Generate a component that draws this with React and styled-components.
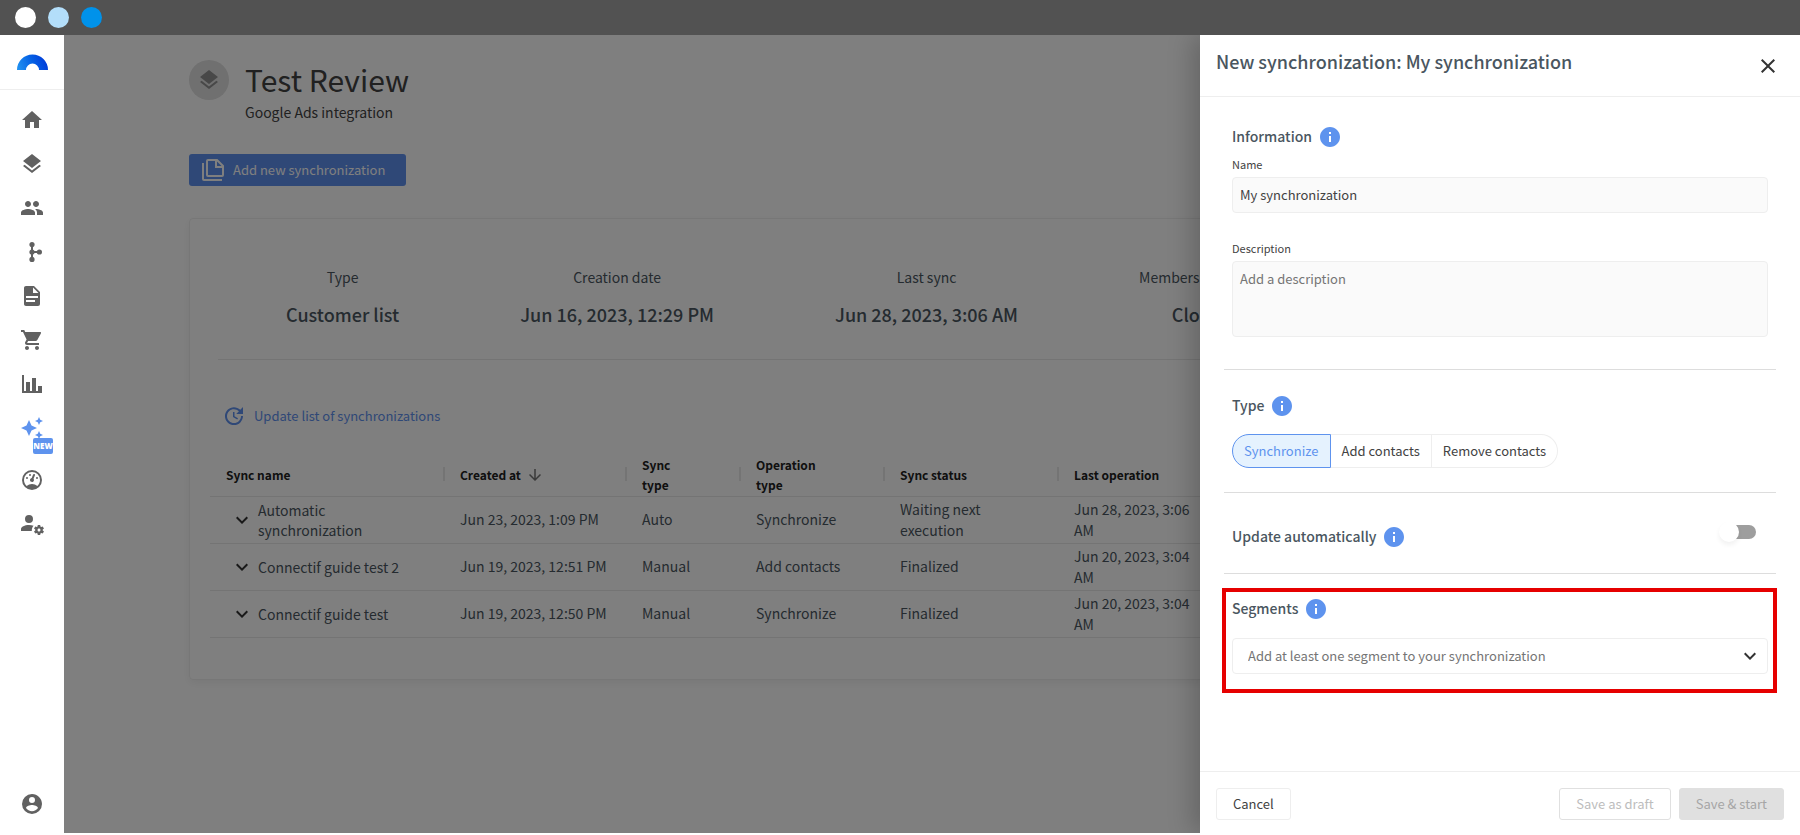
import React, { useState } from "react";
import styled, { createGlobalStyle } from "styled-components";
import {
  MdArrowDownward,
  MdClose,
  MdGroup,
  MdHome,
  MdInfo,
  MdLayers,
  MdShoppingCart,
  MdUpdate,
} from "react-icons/md";

const GlobalStyle = createGlobalStyle`
  * {
    box-sizing: border-box;
  }
  body {
    margin: 0;
    background: #ffffff;
  }
  body, button, input, textarea, select {
    font-family: "Noto Sans CJK SC", "Noto Sans", sans-serif;
  }
`;

/* ---------- icons ---------- */

const Svg = ({ d, size = 24, children }) => (
  <svg width={size} height={size} viewBox="0 0 24 24" fill="currentColor" aria-hidden="true">
    {d && <path d={d} />}
    {children}
  </svg>
);

const Logo = () => (
  <svg width="31" height="16" viewBox="0 0 31 16" aria-hidden="true">
    <defs>
      <linearGradient id="logo" x1="0" y1="0.6" x2="1" y2="0.4">
        <stop offset="0" stopColor="#1f8ff0" />
        <stop offset="0.5" stopColor="#0560e4" />
        <stop offset="1" stopColor="#0038d8" />
      </linearGradient>
    </defs>
    <path d="M0 16a15.5 15.5 0 0 1 31 0h-9a6.5 6.5 0 0 0-13 0z" fill="url(#logo)" />
  </svg>
);

const BranchIcon = () => (
  <Svg>
    <circle cx="12" cy="4.6" r="2.6" />
    <circle cx="12" cy="12" r="2.6" />
    <circle cx="12" cy="19.4" r="2.6" />
    <circle cx="19.4" cy="12" r="2.6" />
    <path d="M11 4.6h2V11h6.4v2H13v6.4h-2z" />
  </Svg>
);

const DocumentIcon = () => (
  <Svg d="M13,9H18.5L13,3.5V9M6,2H14L20,8V20A2,2 0 0,1 18,22H6C4.89,22 4,21.1 4,20V4C4,2.89 4.89,2 6,2M15,18V16H6V18H15M18,14V12H6V14H18Z" />
);

const ChartIcon = () => (
  <Svg d="M22,21H2V3H4V19H6V10H10V19H12V6H16V19H18V14H22V21Z" />
);

const SparklesIcon = () => (
  <Svg d="M19,1L17.74,3.75L15,5L17.74,6.26L19,9L20.25,6.26L23,5L20.25,3.75M9,4L6.5,9.5L1,12L6.5,14.5L9,20L11.5,14.5L17,12L11.5,9.5M19,15L17.74,17.74L15,19L17.74,20.25L19,23L20.25,20.25L23,19L20.25,17.74" />
);

const GaugeIcon = () => (
  <Svg d="M12 2A10 10 0 0 0 2 12A10 10 0 0 0 12 22A10 10 0 0 0 22 12A10 10 0 0 0 12 2M12 4A8 8 0 0 1 20 12C20 14.4 19 16.5 17.3 18C15.9 16.7 14 16 12 16S8.2 16.7 6.7 18C5 16.5 4 14.4 4 12A8 8 0 0 1 12 4M14 5.89C13.62 5.9 13.26 6.15 13.1 6.54L11.81 9.77L11.71 10C11 10.13 10.41 10.6 10.14 11.26C9.73 12.29 10.23 13.45 11.26 13.86C12.29 14.27 13.45 13.77 13.86 12.74C14.12 12.08 14 11.32 13.57 10.76L13.67 10.5L14.96 7.29L14.97 7.26C15.17 6.75 14.92 6.17 14.41 5.96C14.28 5.91 14.15 5.89 14 5.89M10 6A1 1 0 0 0 9 7A1 1 0 0 0 10 8A1 1 0 0 0 11 7A1 1 0 0 0 10 6M7 9A1 1 0 0 0 6 10A1 1 0 0 0 7 11A1 1 0 0 0 8 10A1 1 0 0 0 7 9M17 9A1 1 0 0 0 16 10A1 1 0 0 0 17 11A1 1 0 0 0 18 10A1 1 0 0 0 17 9Z" />
);

const AccountCogIcon = () => (
  <Svg>
    <path
      transform="translate(-1 -1)"
      d="M10 4A4 4 0 0 0 6 8A4 4 0 0 0 10 12A4 4 0 0 0 14 8A4 4 0 0 0 10 4M10 14C5.58 14 2 15.79 2 18V20H12.8C12.7 18 13.2 16 14.6 14.7C13.3 14.2 11.6 14 10 14Z"
    />
    <path
      transform="translate(1 1)"
      d="M17 12C16.87 12 16.76 12.09 16.74 12.21L16.55 13.53C16.25 13.66 15.96 13.82 15.7 14L14.46 13.5C14.35 13.5 14.22 13.5 14.15 13.63L13.15 15.36C13.09 15.47 13.11 15.6 13.21 15.68L14.27 16.5C14.25 16.67 14.24 16.83 14.24 17C14.24 17.17 14.25 17.33 14.27 17.5L13.21 18.32C13.12 18.4 13.09 18.53 13.15 18.64L14.15 20.37C14.21 20.5 14.34 20.5 14.46 20.5L15.7 20C15.96 20.18 16.24 20.35 16.55 20.47L16.74 21.79C16.76 21.91 16.86 22 17 22H19C19.11 22 19.22 21.91 19.24 21.79L19.43 20.47C19.73 20.34 20 20.18 20.27 20L21.5 20.5C21.63 20.5 21.76 20.5 21.83 20.37L22.83 18.64C22.89 18.53 22.86 18.4 22.77 18.32L21.7 17.5C21.72 17.33 21.74 17.17 21.74 17C21.74 16.83 21.73 16.67 21.7 16.5L22.76 15.68C22.85 15.6 22.88 15.47 22.82 15.36L21.82 13.63C21.76 13.5 21.63 13.5 21.5 13.5L20.27 14C20 13.82 19.73 13.65 19.42 13.53L19.23 12.21C19.22 12.09 19.11 12 19 12H17M18 15.5C18.83 15.5 19.5 16.17 19.5 17C19.5 17.83 18.83 18.5 18 18.5C17.16 18.5 16.5 17.83 16.5 17C16.5 16.17 17.17 15.5 18 15.5Z"
    />
  </Svg>
);

const AccountIcon = () => (
  <Svg d="M12,19.2C9.5,19.2 7.29,17.92 6,16C6.03,14 10,12.9 12,12.9C14,12.9 17.97,14 18,16C16.71,17.92 14.5,19.2 12,19.2M12,5A3,3 0 0,1 15,8A3,3 0 0,1 12,11A3,3 0 0,1 9,8A3,3 0 0,1 12,5M12,2A10,10 0 0,0 2,12A10,10 0 0,0 12,22A10,10 0 0,0 22,12C22,6.47 17.5,2 12,2Z" />
);

const ChevronIcon = () => (
  <Svg d="M7.41,8.58L12,13.17L16.59,8.58L18,10L12,16L6,10L7.41,8.58Z" />
);

const FilesIcon = () => (
  <svg width="22" height="22" viewBox="0 0 22 22" fill="none" stroke="currentColor" strokeWidth="2" aria-hidden="true">
    <path d="M1 4v16a1 1 0 0 0 1 1h18" />
    <path d="M6 1h9l6 6v9a1 1 0 0 1-1 1H6a1 1 0 0 1-1-1V2a1 1 0 0 1 1-1z" />
    <path d="M14 1v7h7" />
  </svg>
);

/* ---------- data ---------- */

const navItems = [
  { label: "Home", icon: <MdHome size={24} /> },
  { label: "Integrations", icon: <MdLayers size={24} /> },
  { label: "Contacts", icon: <MdGroup size={24} /> },
  { label: "Workflows", icon: <BranchIcon /> },
  { label: "Content", icon: <DocumentIcon /> },
  { label: "Store", icon: <MdShoppingCart size={24} /> },
  { label: "Analytics", icon: <ChartIcon /> },
  { label: "AI", icon: <SparklesIcon />, isNew: true },
  { label: "Performance", icon: <GaugeIcon /> },
  { label: "User settings", icon: <AccountCogIcon /> },
];

const stats = [
  { label: "Type", value: "Customer list" },
  { label: "Creation date", value: "Jun 16, 2023, 12:29 PM" },
  { label: "Last sync", value: "Jun 28, 2023, 3:06 AM" },
  { label: "Membership status", value: "Closed" },
];

const columns = [
  { label: "Sync name", width: 234 },
  { label: "Created at", width: 182, sorted: true },
  { label: "Sync type", width: 114 },
  { label: "Operation type", width: 144 },
  { label: "Sync status", width: 174 },
  { label: "Last operation", width: 152 },
];

const rows = [
  ["Automatic synchronization", "Jun 23, 2023, 1:09 PM", "Auto", "Synchronize", "Waiting next execution", "Jun 28, 2023, 3:06 AM"],
  ["Connectif guide test 2", "Jun 19, 2023, 12:51 PM", "Manual", "Add contacts", "Finalized", "Jun 20, 2023, 3:04 AM"],
  ["Connectif guide test", "Jun 19, 2023, 12:50 PM", "Manual", "Synchronize", "Finalized", "Jun 20, 2023, 3:04 AM"],
];

const syncTypes = ["Synchronize", "Add contacts", "Remove contacts"];

/* ---------- page ---------- */

export default function App() {
  const [name, setName] = useState("My synchronization");
  const [type, setType] = useState("Synchronize");

  return (
    <Page>
      <GlobalStyle />
      <WindowBar>
        <Dot $color="#ffffff" />
        <Dot $color="#b3defa" />
        <Dot $color="#0092ea" />
      </WindowBar>
      <Body>
        <Sidebar>
          <LogoLink href="#" aria-label="Dashboard">
            <Logo />
          </LogoLink>
          <NavList>
            {navItems.map((item) => (
              <NavLink key={item.label} href="#" aria-label={item.label} $active={item.isNew}>
                {item.icon}
                {item.isNew && <NewBadge>NEW</NewBadge>}
              </NavLink>
            ))}
          </NavList>
          <NavLink href="#" aria-label="Account">
            <AccountIcon />
          </NavLink>
        </Sidebar>

        <Main>
          <Heading>
            <Avatar>
              <MdLayers size={24} />
            </Avatar>
            <div>
              <Title>Test Review</Title>
              <Subtitle>Google Ads integration</Subtitle>
            </div>
          </Heading>
          <AddButton type="button">
            <FilesIcon />
            <span>Add new synchronization</span>
          </AddButton>

          <Card>
            <Stats>
              {stats.map((stat) => (
                <Stat key={stat.label}>
                  <dt>{stat.label}</dt>
                  <dd>{stat.value}</dd>
                </Stat>
              ))}
            </Stats>
            <UpdateButton type="button">
              <MdUpdate size={24} />
              <span>Update list of synchronizations</span>
            </UpdateButton>
            <Table>
              <colgroup>
                {columns.map((col) => (
                  <Col key={col.label} $width={col.width} />
                ))}
                <col />
              </colgroup>
              <thead>
                <tr>
                  {columns.map((col) => (
                    <Th key={col.label}>
                      <ThInner>
                        {col.label}
                        {col.sorted && <MdArrowDownward size={18} />}
                      </ThInner>
                    </Th>
                  ))}
                  <EmptyCell />
                </tr>
              </thead>
              <tbody>
                {rows.map((row) => (
                  <tr key={row[0]}>
                    {row.map((cell, i) => (
                      <Td key={columns[i].label}>
                        {i === 0 ? (
                          <NameCell>
                            <ExpandButton type="button" aria-label={"Expand " + cell}>
                              <ChevronIcon />
                            </ExpandButton>
                            {cell}
                          </NameCell>
                        ) : (
                          cell
                        )}
                      </Td>
                    ))}
                    <EmptyCell />
                  </tr>
                ))}
              </tbody>
            </Table>
          </Card>
          <Backdrop />
        </Main>

        <Drawer>
          <DrawerHeader>
            <DrawerTitle>New synchronization: My synchronization</DrawerTitle>
            <CloseButton type="button" aria-label="Close">
              <MdClose size={24} />
            </CloseButton>
          </DrawerHeader>

          <DrawerBody>
            <InfoSection>
              <SectionTitle>
                Information <MdInfo size={24} />
              </SectionTitle>
              <Field>
                <label htmlFor="name">Name</label>
                <Input id="name" value={name} onChange={(e) => setName(e.target.value)} />
              </Field>
              <Field>
                <label htmlFor="description">Description</label>
                <Textarea id="description" placeholder="Add a description" />
              </Field>
            </InfoSection>

            <Section>
              <SectionTitle>
                Type <MdInfo size={24} />
              </SectionTitle>
              <ButtonGroup>
                {syncTypes.map((item) => (
                  <GroupButton key={item} type="button" $active={item === type} onClick={() => setType(item)}>
                    {item}
                  </GroupButton>
                ))}
              </ButtonGroup>
            </Section>

            <UpdateSection>
              <SectionTitle as="label" htmlFor="auto">
                Update automatically <MdInfo size={24} />
              </SectionTitle>
              <Switch id="auto" type="checkbox" role="switch" />
            </UpdateSection>

            <SegmentSection>
              <SectionTitle as="label" htmlFor="segments">
                Segments <MdInfo size={24} />
              </SectionTitle>
              <SelectBox>
                <Select id="segments" defaultValue="">
                  <option value="">Add at least one segment to your synchronization</option>
                </Select>
                <ChevronIcon />
              </SelectBox>
            </SegmentSection>
          </DrawerBody>

          <DrawerFooter>
            <Button type="button">Cancel</Button>
            <FooterRight>
              <Button type="button" disabled>
                Save as draft
              </Button>
              <Button type="button" disabled $filled>
                Save &amp; start
              </Button>
            </FooterRight>
          </DrawerFooter>
        </Drawer>
      </Body>
    </Page>
  );
}

/* ---------- styles ---------- */

const Page = styled.div`
  display: flex;
  flex-direction: column;
  min-height: 100vh;
  padding-bottom: 2px;
  font-size: 14px;
  line-height: 20px;
  color: #4a5660;
`;

const WindowBar = styled.div`
  display: flex;
  align-items: center;
  gap: 12px;
  height: 35px;
  padding: 0 15px;
  background: #525252;
`;

const Dot = styled.span`
  width: 21px;
  height: 21px;
  border-radius: 50%;
  background: ${(p) => p.$color};
`;

const Body = styled.div`
  position: relative;
  flex: 1;
  display: flex;
`;

const Sidebar = styled.nav`
  display: flex;
  flex-direction: column;
  width: 64px;
  flex-shrink: 0;
  padding-bottom: 7px;
  background: #ffffff;
`;

const LogoLink = styled.a`
  display: flex;
  align-items: center;
  justify-content: center;
  height: 55px;
  border-bottom: 1px solid #eeeeee;
`;

const NavList = styled.div`
  flex: 1;
  padding-top: 8px;
`;

const NavLink = styled.a`
  position: relative;
  display: flex;
  align-items: center;
  justify-content: center;
  height: 44px;
  margin-bottom: ${(p) => (p.$active ? "8px" : "0")};
  color: ${(p) => (p.$active ? "#5e93ee" : "#616161")};
`;

const NewBadge = styled.span`
  position: absolute;
  left: 33px;
  top: 32px;
  width: 20px;
  height: 16px;
  border-radius: 2px;
  background: #5e93ee;
  color: #ffffff;
  font-family: "Open Sans", sans-serif;
  font-size: 8px;
  font-weight: 800;
  line-height: 16px;
  text-align: center;
`;

const Main = styled.main`
  position: relative;
  flex: 1;
  min-width: 0;
  padding: 25px 125px 0;
  overflow: hidden;
`;

const Backdrop = styled.div`
  position: absolute;
  inset: 0;
  background: rgba(0, 0, 0, 0.5);
`;

const Heading = styled.header`
  display: flex;
  gap: 16px;
`;

const Avatar = styled.div`
  display: flex;
  align-items: center;
  justify-content: center;
  width: 40px;
  height: 40px;
  border-radius: 50%;
  background: #e0e0e0;
  color: #909090;
`;

const Title = styled.h1`
  margin: 0;
  font-size: 30px;
  font-weight: 400;
  line-height: 38px;
  color: #424242;
`;

const Subtitle = styled.p`
  margin: 0;
  padding-top: 2px;
  line-height: 24px;
  color: #424242;
`;

const AddButton = styled.button`
  display: flex;
  align-items: center;
  gap: 9px;
  height: 32px;
  margin-top: 30px;
  padding: 0 21px 0 13px;
  border: none;
  border-radius: 3px;
  background: #5e90ee;
  color: #ffffff;
  font-size: 13px;

  span {
    padding-bottom: 2px;
  }
`;

const Card = styled.section`
  margin-top: 32px;
  padding: 46px 20px 41px;
  border: 1px solid #eeeeee;
  border-radius: 4px;
  box-shadow: 0 3px 8px rgba(0, 0, 0, 0.06);
`;

const Stats = styled.dl`
  display: flex;
  gap: 121px;
  margin: 0 8px;
  padding: 0 68px 33px;
  border-bottom: 1px solid #e8e8e8;
  text-align: center;
  white-space: nowrap;
`;

const Stat = styled.div`
  dt {
    line-height: 24px;
  }
  dd {
    margin: 13px 0 0;
    font-size: 18px;
    font-weight: 500;
    line-height: 24px;
  }
`;

const UpdateButton = styled.button`
  display: flex;
  align-items: center;
  gap: 8px;
  margin: 44px 0 0 12px;
  padding: 0;
  border: none;
  background: none;
  color: #5e90ee;
  font-size: 13px;

  span {
    padding-bottom: 2px;
  }
`;

const Table = styled.table`
  width: 100%;
  margin-top: 27px;
  table-layout: fixed;
  border-collapse: collapse;
`;

const Col = styled.col`
  width: ${(p) => p.$width}px;
`;

const Td = styled.td`
  height: 47px;
  padding: 0 16px;
  border-bottom: 1px solid #e8e8e8;
  line-height: 21px;
`;

const EmptyCell = styled.td`
  border-bottom: 1px solid #e8e8e8;
`;

const Th = styled.th`
  height: 41px;
  padding: 0;
  border-bottom: 1px solid #e8e8e8;
  color: #212121;
  font-size: 12px;
  font-weight: 700;
  text-align: left;

  & + & > div::before {
    content: "";
    position: absolute;
    left: -1px;
    top: 50%;
    width: 2px;
    height: 14px;
    margin-top: -8px;
    background: #e8e8e8;
  }
`;

const ThInner = styled.div`
  position: relative;
  display: flex;
  align-items: center;
  gap: 5px;
  padding: 0 48px 0 16px;

  svg {
    flex-shrink: 0;
    color: #757575;
  }
`;

const NameCell = styled.div`
  display: flex;
  align-items: center;
  gap: 4px;
  padding-left: 4px;
  line-height: 20px;
`;

const ExpandButton = styled.button`
  display: flex;
  padding: 0;
  border: none;
  background: none;
  color: #333333;
`;

const Drawer = styled.aside`
  position: absolute;
  top: 0;
  right: 0;
  bottom: 0;
  display: flex;
  flex-direction: column;
  width: 600px;
  background: #ffffff;
  box-shadow: -8px 0 24px rgba(0, 0, 0, 0.2);
  clip-path: inset(0 0 0 -40px);
`;

const DrawerHeader = styled.header`
  display: flex;
  justify-content: space-between;
  height: 62px;
  padding: 15px 20px 0 16px;
  border-bottom: 1px solid #eeeeee;
`;

const DrawerTitle = styled.h2`
  margin: 0;
  font-size: 18px;
  font-weight: 500;
  line-height: 22px;
`;

const CloseButton = styled.button`
  display: flex;
  align-items: center;
  height: 32px;
  padding: 0;
  border: none;
  background: none;
  color: #333333;
`;

const DrawerBody = styled.div`
  flex: 1;
  padding: 0 24px;
`;

const Section = styled.section`
  padding: 24px 8px;
  border-bottom: 1px solid #dddddd;
`;

const InfoSection = styled(Section)`
  padding-top: 28px;
  padding-bottom: 32px;
`;

const UpdateSection = styled(Section)`
  display: flex;
  justify-content: space-between;
  padding-top: 32px;
  padding-right: 20px;
`;

const SegmentSection = styled.section`
  margin: 14px -1px 0 -2px;
  padding: 5px 5px 15px 6px;
  border: 4px solid #e60000;
`;

const SectionTitle = styled.h3`
  display: flex;
  align-items: flex-start;
  gap: 6px;
  margin: 0;
  font-size: 14px;
  font-weight: 500;
  line-height: 22px;

  svg {
    color: #5e93ee;
  }
`;

const Field = styled.div`
  display: flex;
  flex-direction: column;

  label {
    margin: 7px 0 5px;
    font-size: 11px;
    line-height: 16px;
    color: #424242;
  }

  & + & label {
    margin-top: 27px;
  }
`;

const Input = styled.input`
  height: 36px;
  padding: 0 7px 2px;
  border: 1px solid #eeeeee;
  border-radius: 4px;
  background: #fafafa;
  color: #424242;
  font-size: 13px;
`;

const Textarea = styled.textarea`
  height: 76px;
  padding: 7px;
  border: 1px solid #eeeeee;
  border-radius: 4px;
  background: #fafafa;
  color: #424242;
  font-size: 13px;
  line-height: 20px;
  resize: none;

  &::placeholder {
    color: #757575;
  }
`;

const ButtonGroup = styled.div`
  display: flex;
  margin-top: 16px;
`;

const GroupButton = styled.button`
  height: 34px;
  padding: 0 11px 2px;
  border: 1px solid ${(p) => (p.$active ? "#5e93ee" : "#eeeeee")};
  border-left-width: ${(p) => (p.$active ? "1px" : "0")};
  background: ${(p) => (p.$active ? "#e5f2fe" : "#ffffff")};
  color: ${(p) => (p.$active ? "#5e93ee" : "#424242")};
  font-size: 13px;

  &:first-child {
    border-radius: 17px 0 0 17px;
  }
  &:last-child {
    border-radius: 0 17px 17px 0;
  }
`;

const Switch = styled.input`
  appearance: none;
  position: relative;
  width: 36px;
  height: 14px;
  margin: 0;
  border-radius: 7px;
  background: #9e9e9e;

  &::before {
    content: "";
    position: absolute;
    left: -1px;
    top: -3px;
    width: 20px;
    height: 20px;
    border-radius: 50%;
    background: #ffffff;
    box-shadow: 0 3px 5px rgba(0, 0, 0, 0.06);
  }
  &:checked::before {
    left: 17px;
  }
`;

const SelectBox = styled.div`
  position: relative;
  margin-top: 17px;

  svg {
    position: absolute;
    right: 6px;
    top: 6px;
    color: #333333;
    pointer-events: none;
  }
`;

const Select = styled.select`
  appearance: none;
  width: 100%;
  height: 36px;
  padding: 0 40px 2px 15px;
  border: 1px solid #eeeeee;
  border-radius: 4px;
  background: #ffffff;
  color: #757575;
  font-size: 13px;
`;

const DrawerFooter = styled.footer`
  display: flex;
  justify-content: space-between;
  padding: 16px 16px 13px;
  border-top: 1px solid #eeeeee;
`;

const FooterRight = styled.div`
  display: flex;
  gap: 8px;
`;

const Button = styled.button`
  height: 32px;
  padding: 0 16px 2px;
  border: 1px solid #eeeeee;
  border-radius: 3px;
  background: #ffffff;
  color: #424242;
  font-size: 13px;

  &:disabled {
    border-color: #e0e0e0;
    background: ${(p) => (p.$filled ? "#e0e0e0" : "#ffffff")};
    color: ${(p) => (p.$filled ? "#a6a6a6" : "#bdbdbd")};
  }
`;
